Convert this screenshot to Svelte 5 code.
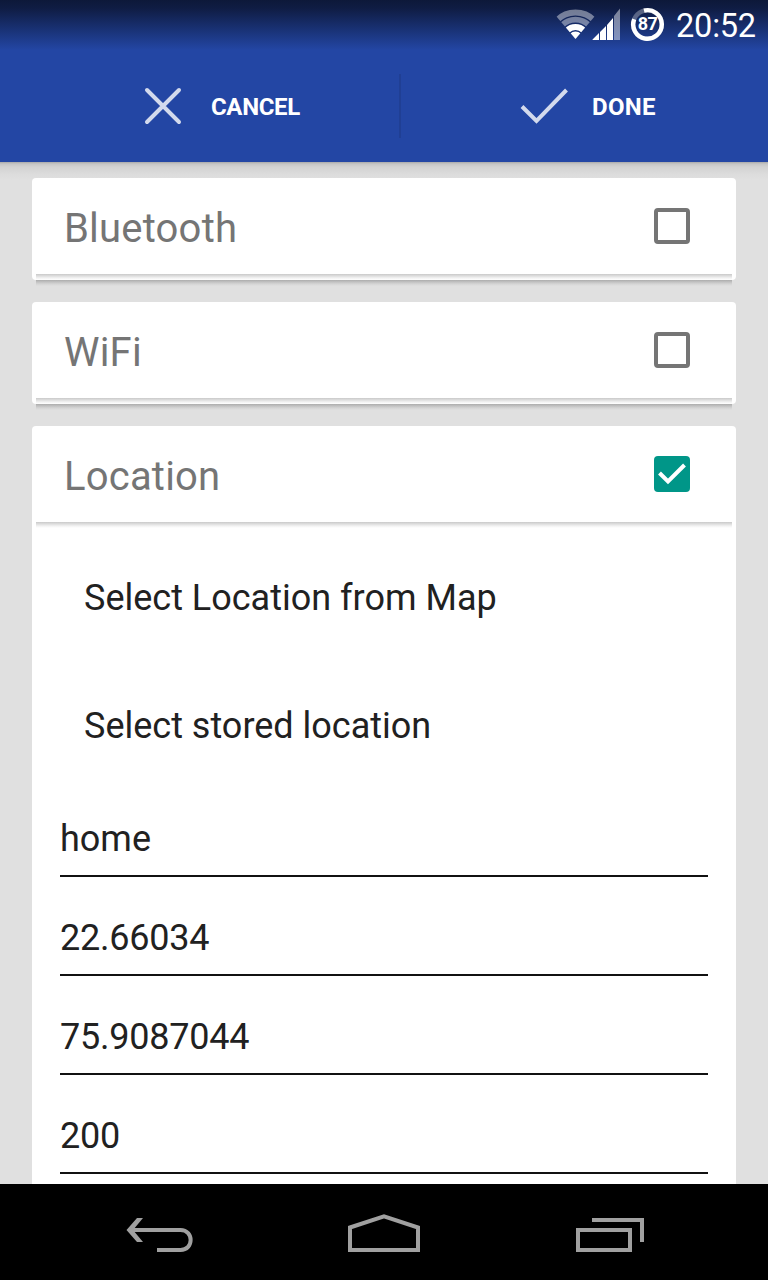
<script>
  let sensors = $state([
    { name: 'Bluetooth', on: false },
    { name: 'WiFi', on: false },
    { name: 'Location', on: true }
  ]);
  const actions = ['Select Location from Map', 'Select stored location'];
  let fields = $state(['home', '22.66034', '75.9087044', '200']);
</script>

<div class="screen">
  <header>
    <div class="status">
      <svg width="116" height="50" viewBox="0 0 116 50">
        <defs>
          <clipPath id="fan"><path d="M27.5 39 L7.2 15 Q27.5 -3 47.8 15Z" /></clipPath>
        </defs>
        <g clip-path="url(#fan)" fill="none" stroke="#fff">
          <circle cx="27.5" cy="39" r="26.5" stroke-width="5.8" opacity=".42" />
          <circle cx="27.5" cy="39" r="19.3" stroke-width="5.8" opacity=".42" />
          <circle cx="27.5" cy="39" r="12" stroke-width="6" />
          <circle cx="27.5" cy="39" r="3.8" stroke-width="7.6" />
        </g>
        <path d="M44.5 40V39.5L51 33V40ZM52 40V32L58 26V40ZM59 40V25L65 18V40Z" fill="#fff" />
        <path d="M66 40V16L72 8.5V40Z" fill="#fff" opacity=".45" />
        <circle cx="99.5" cy="24.5" r="14.3" fill="none" stroke="#fff" stroke-opacity=".3" stroke-width="4.4" />
        <path d="M96 10.6A14.3 14.3 0 1 1 86.2 19.2" fill="none" stroke="#fff" stroke-width="4.4" />
        <text x="99.5" y="30" text-anchor="middle" class="battery">87</text>
      </svg>
      <span class="clock">20:52</span>
    </div>
    <div class="actionbar">
      <button class="cancel">
        <svg width="40" height="40" viewBox="0 0 40 40"><path d="M4 4L36 36M36 4L4 36" /></svg>
        <span>CANCEL</span>
      </button>
      <i class="divider"></i>
      <button class="done">
        <svg width="50" height="40" viewBox="0 0 50 40"><path d="M3 20.5L17.5 35L47.5 4" /></svg>
        <span>DONE</span>
      </button>
    </div>
  </header>

  <main>
    {#each sensors as sensor}
      <section class="card" class:open={sensor.on}>
        <div class="row">
          <span class="label">{sensor.name}</span>
          <span class="box" class:checked={sensor.on}>
            {#if sensor.on}
              <svg width="36" height="36" viewBox="0 0 36 36"><path d="M5.5 17L14 25.5L30.5 9" /></svg>
            {/if}
          </span>
        </div>
        <div class="shade inner"></div>
        {#if sensor.on}
          <div class="details">
            {#each actions as action}
              <div class="action">{action}</div>
            {/each}
            {#each fields as value}
              <div class="field" class:number={!isNaN(Number(value))}>{value}</div>
            {/each}
          </div>
        {/if}
      </section>
      {#if !sensor.on}<div class="shade outer"></div>{/if}
    {/each}
  </main>

  <nav>
    <svg width="768" height="96" viewBox="0 0 768 96">
      <path d="M130 46H180.5C194 46 194 66 180.5 66H157" />
      <path class="head" d="M126.5 46L137 34H143L133 46L143 58H137Z" />
      <path d="M350 43.5L384 32.3L418 43.5V66H350Z" />
      <path d="M578 46H630V66H578ZM592 36H642V58" />
    </svg>
  </nav>
</div>

<style>
  :global(body) { margin: 0; }
  .screen {
    width: 768px;
    height: 1280px;
    display: flex;
    flex-direction: column;
    overflow: hidden;
    background: #e0e0e0;
    font-family: Roboto, sans-serif;
  }
  header {
    flex: none;
    height: 162px;
    background: linear-gradient(#0d1839 0, #0f1c43 8px, #2346a4 50px, #2346a4 100%);
  }
  .status {
    height: 50px;
    padding-left: 548px;
    display: flex;
  }
  .battery { font-size: 18px; font-weight: 700; letter-spacing: -0.6px; fill: #fff; }
  .clock {
    margin-left: 12px;
    font-size: 32.5px;
    line-height: 52px;
    letter-spacing: -0.2px;
    color: #fff;
  }
  .actionbar { display: flex; height: 112px; align-items: flex-start; }
  button {
    display: flex;
    align-items: center;
    height: 112px;
    padding: 0;
    border: 0;
    background: none;
    color: #fff;
    font: 700 24px/28px Roboto, sans-serif;
  }
  .cancel { width: 399px; padding-left: 143px; }
  .cancel span { margin-left: 28px; letter-spacing: -0.35px; }
  .done { padding-left: 118px; }
  .done span { margin-left: 23px; letter-spacing: 0.3px; }
  button span { margin-top: 2px; }
  button svg { fill: none; stroke: #d3daed; stroke-width: 4; }
  .cancel svg { stroke-linecap: round; }
  .divider { width: 2px; height: 64px; margin-top: 24px; background: #203f94; }
  main {
    flex: 1;
    min-height: 0;
    box-sizing: border-box;
    display: flex;
    flex-direction: column;
    overflow: hidden;
    padding: 16px 32px 0;
    background: linear-gradient(#a9a9a9 0, #c6c6c6 2px, #d2d2d2 5px, #dcdcdc 12px, #e0e0e0 18px);
  }
  .card { flex: none; background: #fff; border-radius: 4px; height: 102px; }
  .card.open { height: auto; padding-bottom: 28px; }
  .row {
    display: flex;
    justify-content: space-between;
    height: 96px;
    padding: 0 46px 0 32px;
  }
  .label { font-size: 40px; line-height: 102px; letter-spacing: 0.2px; color: #757575; }
  .box {
    box-sizing: border-box;
    width: 36px;
    height: 36px;
    margin-top: 30px;
    border: 4px solid #757575;
    border-radius: 4px;
  }
  .box.checked { border: 0; background: #009688; }
  .box svg { display: block; fill: none; stroke: #fff; stroke-width: 4; }
  .shade { flex: none; height: 6px; margin: 0 4px; }
  .inner { background: linear-gradient(#c9c9c9 0, #dedede 2px, #f2f2f2 4px, #fff 6px); }
  .outer { margin-bottom: 16px; background: linear-gradient(#acacac 0, #c2c2c2 2px, #d5d5d5 4px, #e0e0e0 6px); }
  .details { padding: 6px 28px 0; color: #212121; font-size: 36px; }
  .action { height: 128px; line-height: 128px; padding-left: 24px; }
  .field {
    box-sizing: border-box;
    height: 99px;
    padding-top: 25px;
    line-height: 72px;
    border-bottom: 2px solid #111;
  }
  .field.number { letter-spacing: -0.22px; }
  .action + .field { height: 87px; padding-top: 13px; }
  nav { flex: none; height: 96px; background: #000; }
  nav svg { display: block; fill: none; stroke: #a0a0a0; stroke-width: 4; }
  nav .head { fill: #a0a0a0; stroke: none; }
</style>
